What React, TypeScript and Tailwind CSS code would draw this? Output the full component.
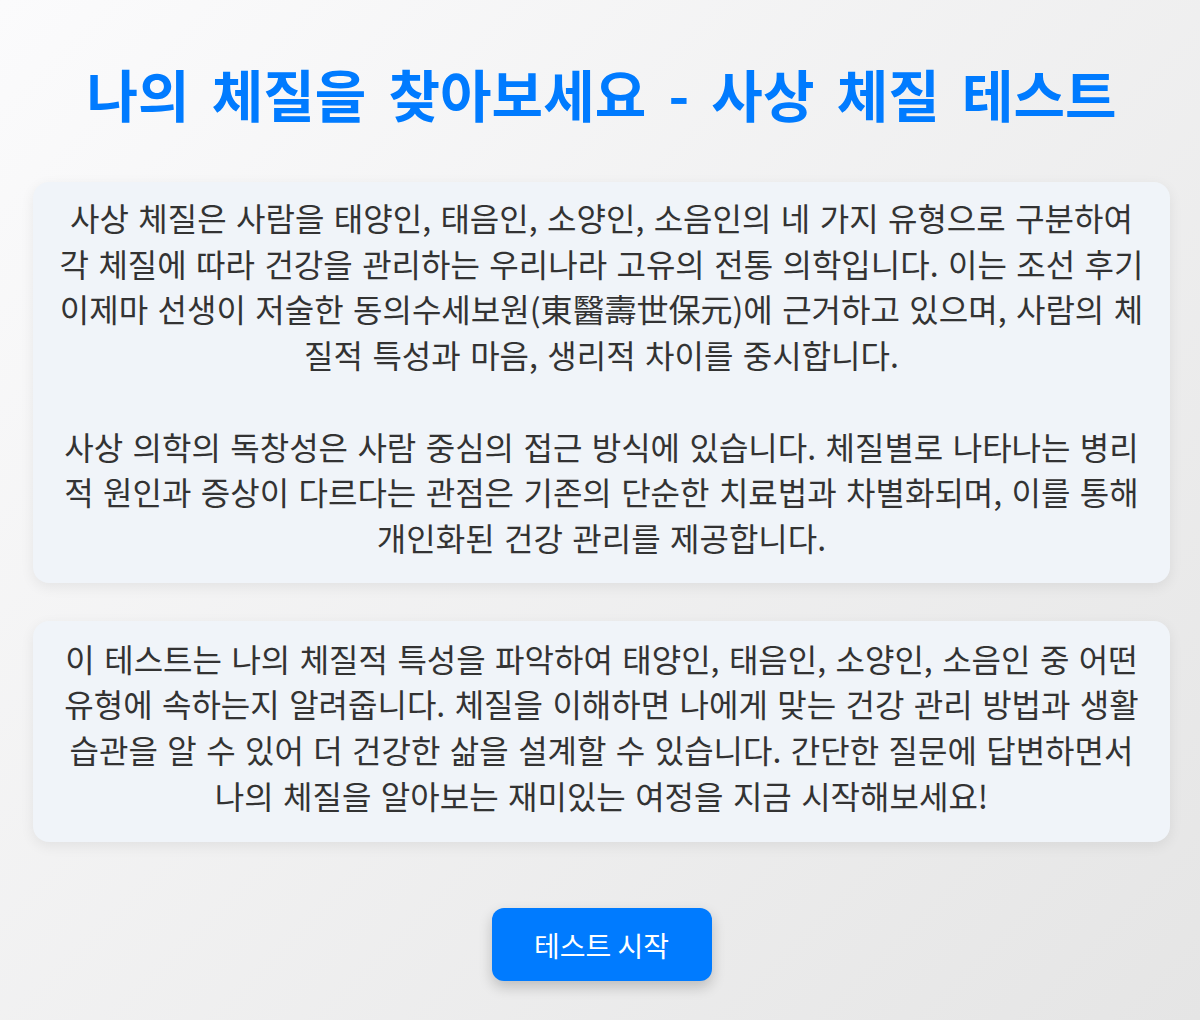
import React from 'react';

const intro = [
  '사상 체질은 사람을 태양인, 태음인, 소양인, 소음인의 네 가지 유형으로 구분하여 각 체질에 따라 건강을 관리하는 우리나라 고유의 전통 의학입니다. 이는 조선 후기 이제마 선생이 저술한 동의수세보원(東醫壽世保元)에 근거하고 있으며, 사람의 체질적 특성과 마음, 생리적 차이를 중시합니다.',
  '사상 의학의 독창성은 사람 중심의 접근 방식에 있습니다. 체질별로 나타나는 병리적 원인과 증상이 다르다는 관점은 기존의 단순한 치료법과 차별화되며, 이를 통해 개인화된 건강 관리를 제공합니다.',
];

const about =
  '이 테스트는 나의 체질적 특성을 파악하여 태양인, 태음인, 소양인, 소음인 중 어떤 유형에 속하는지 알려줍니다. 체질을 이해하면 나에게 맞는 건강 관리 방법과 생활 습관을 알 수 있어 더 건강한 삶을 설계할 수 있습니다. 간단한 질문에 답변하면서 나의 체질을 알아보는 재미있는 여정을 지금 시작해보세요!';

const Card: React.FC<{ children: React.ReactNode; className?: string }> = ({ children, className }) => (
  <div className={`bg-[#f0f4f9] rounded-2xl px-[22px] shadow-[0_4px_14px_rgba(0,0,0,0.07)] ${className ?? ''}`}>
    <p className="text-center text-[32px] leading-[45.7px] [word-spacing:0.07em] text-[#333]">{children}</p>
  </div>
);

export default function App() {
  return (
    <div
      className="min-h-[1020px] bg-[linear-gradient(135deg,#fbfbfc_0%,#e5e5e5_100%)] pl-[33px] pr-[30px] pt-[59px] pb-10"
      style={{ fontFamily: '"Noto Sans CJK KR", "Noto Sans", sans-serif' }}
    >
      <h1 className="text-center text-[56px] font-bold leading-[67px] [word-spacing:0.17em] text-[#007bff] mb-[56px]">
        나의 체질을 찾아보세요 - 사상 체질 테스트
      </h1>

      <div className="flex flex-col gap-[38px]">
        <Card className="pt-[13px] pb-[22px]">
          {intro[0]}
          <br />
          <br />
          {intro[1]}
        </Card>
        <Card className="pt-[15px] pb-[24px]">{about}</Card>
      </div>

      <div className="flex justify-center mt-[66px]">
        <button className="w-[220px] h-[73px] rounded-xl bg-[#007bff] text-white text-[28px] shadow-[0_6px_14px_rgba(0,0,0,0.2)]">
          테스트 시작
        </button>
      </div>
    </div>
  );
}
